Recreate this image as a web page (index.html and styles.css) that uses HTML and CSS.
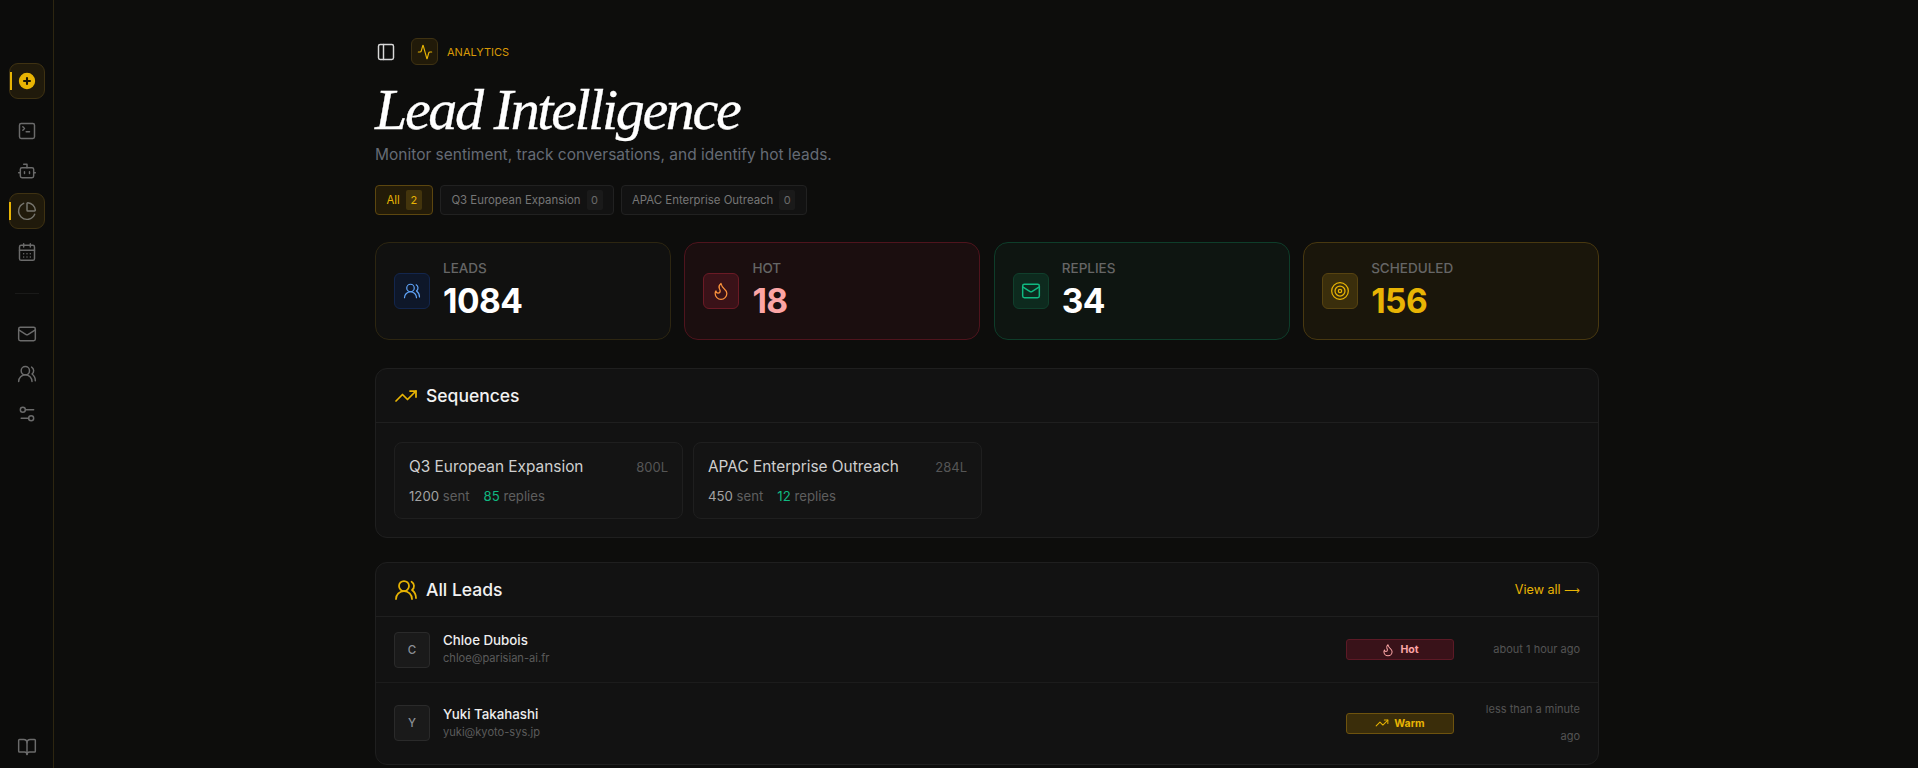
FILE: index.html
```html
<!DOCTYPE html>
<html lang="en">
<head>
<meta charset="utf-8">
<title>Lead Intelligence</title>
<link rel="stylesheet" href="styles.css">
</head>
<body>
<svg class="defs" width="0" height="0" aria-hidden="true">
  <symbol id="i-users" viewBox="0 0 24 24"><path d="M18 21a8 8 0 0 0-16 0"/><circle cx="10" cy="8" r="5"/><path d="M22 20c0-3.37-2-6.5-4-8a5 5 0 0 0-.45-8.3"/></symbol>
  <symbol id="i-flame" viewBox="0 0 24 24"><path d="M8.5 14.5A2.5 2.5 0 0 0 11 12c0-1.38-.5-2-1-3-1.072-2.143-.224-4.054 2-6 .5 2.5 2 4.9 4 6.5 2 1.6 3 3.5 3 5.5a7 7 0 1 1-14 0c0-1.153.433-2.294 1-3a2.5 2.5 0 0 0 2.5 2.5z"/></symbol>
  <symbol id="i-mail" viewBox="0 0 24 24"><path d="m22 7-8.97 5.7a1.94 1.94 0 0 1-2.06 0L2 7"/><rect x="2" y="4" width="20" height="16" rx="2"/></symbol>
  <symbol id="i-trend" viewBox="0 0 24 24"><path d="M22 7 13.5 15.5 8.5 10.5 2 17"/><path d="M16 7h6v6"/></symbol>
</svg>
<aside class="sidebar">
  <div class="side-group first">
    <a class="side-btn active inset"><svg class="ic plus" viewBox="0 0 24 24"><circle class="plus-disc" cx="12" cy="12" r="10"/><path class="plus-mark" d="M8 12h8M12 8v8"/></svg></a>
    <a class="side-btn"><svg class="ic" viewBox="0 0 24 24"><path d="m7 11 2-2-2-2"/><path d="M11 13h4"/><rect x="3" y="3" width="18" height="18" rx="2"/></svg></a>
    <a class="side-btn"><svg class="ic" viewBox="0 0 24 24"><path d="M12 8V4H8"/><rect x="4" y="8" width="16" height="12" rx="2"/><path d="M2 14h2M20 14h2M15 13v2M9 13v2"/></svg></a>
    <a class="side-btn active"><svg class="ic" viewBox="0 0 24 24"><path d="M21 12c.552 0 1.005-.449.95-.998a10 10 0 0 0-8.953-8.951c-.55-.055-.998.398-.998.95v8a1 1 0 0 0 1 1z"/><path d="M21.21 15.89A10 10 0 1 1 8 2.83"/></svg></a>
    <a class="side-btn"><svg class="ic" viewBox="0 0 24 24"><path d="M8 2v4M16 2v4"/><rect x="3" y="4" width="18" height="18" rx="2"/><path d="M3 10h18M8 14h.01M12 14h.01M16 14h.01M8 18h.01M12 18h.01M16 18h.01"/></svg></a>
  </div>
  <div class="side-divider"></div>
  <div class="side-group">
    <a class="side-btn"><svg class="ic"><use href="#i-mail"/></svg></a>
    <a class="side-btn"><svg class="ic"><use href="#i-users"/></svg></a>
    <a class="side-btn"><svg class="ic" viewBox="0 0 24 24"><path d="M20 7h-9M14 17H5"/><circle cx="17" cy="17" r="3"/><circle cx="7" cy="7" r="3"/></svg></a>
  </div>
  <div class="side-foot">
    <a class="side-btn"><svg class="ic" viewBox="0 0 24 24"><path d="M12 7v14"/><path d="M3 18a1 1 0 0 1-1-1V4a1 1 0 0 1 1-1h5a4 4 0 0 1 4 4 4 4 0 0 1 4-4h5a1 1 0 0 1 1 1v13a1 1 0 0 1-1 1h-6a3 3 0 0 0-3 3 3 3 0 0 0-3-3z"/></svg></a>
  </div>
</aside>
<main class="main">
  <div class="content">
    <div class="crumb">
      <svg class="ic toggle" viewBox="0 0 24 24"><rect x="3" y="3" width="18" height="18" rx="2"/><path d="M9 3v18"/></svg>
      <span class="crumb-icon"><svg class="ic" viewBox="0 0 24 24"><path d="M22 12h-2.48a2 2 0 0 0-1.93 1.46l-2.35 8.36a.25.25 0 0 1-.48 0L9.24 2.18a.25.25 0 0 0-.48 0l-2.35 8.36A2 2 0 0 1 4.49 12H2"/></svg></span>
      <span class="crumb-label">Analytics</span>
    </div>
    <h1 class="title">Lead Intelligence</h1>
    <p class="subtitle">Monitor sentiment, track conversations, and identify hot leads.</p>
    <div class="tabs">
      <a class="tab on">All <span class="count">2</span></a>
      <a class="tab">Q3 European Expansion <span class="count">0</span></a>
      <a class="tab">APAC Enterprise Outreach <span class="count">0</span></a>
    </div>
    <section class="stats">
      <div class="stat s-blue">
        <span class="stat-icon"><svg class="ic"><use href="#i-users"/></svg></span>
        <div class="stat-text"><div class="stat-label">Leads</div><div class="stat-num">1084</div></div>
      </div>
      <div class="stat s-red">
        <span class="stat-icon"><svg class="ic"><use href="#i-flame"/></svg></span>
        <div class="stat-text"><div class="stat-label">Hot</div><div class="stat-num">18</div></div>
      </div>
      <div class="stat s-green">
        <span class="stat-icon"><svg class="ic"><use href="#i-mail"/></svg></span>
        <div class="stat-text"><div class="stat-label">Replies</div><div class="stat-num">34</div></div>
      </div>
      <div class="stat s-gold">
        <span class="stat-icon"><svg class="ic" viewBox="0 0 24 24"><circle cx="12" cy="12" r="10"/><circle cx="12" cy="12" r="6"/><circle cx="12" cy="12" r="2"/></svg></span>
        <div class="stat-text"><div class="stat-label">Scheduled</div><div class="stat-num">156</div></div>
      </div>
    </section>
    <section class="panel seqs">
      <header class="panel-head">
        <h2><svg class="ic"><use href="#i-trend"/></svg>Sequences</h2>
      </header>
      <div class="seq-grid">
        <div class="seq">
          <div class="seq-top"><span class="seq-name">Q3 European Expansion</span><span class="seq-leads">800L</span></div>
          <div class="seq-meta"><span><b>1200</b> sent</span><span><b class="green">85</b> replies</span></div>
        </div>
        <div class="seq">
          <div class="seq-top"><span class="seq-name">APAC Enterprise Outreach</span><span class="seq-leads">284L</span></div>
          <div class="seq-meta"><span><b>450</b> sent</span><span><b class="green">12</b> replies</span></div>
        </div>
      </div>
    </section>
    <section class="panel leads">
      <header class="panel-head">
        <h2><svg class="ic"><use href="#i-users"/></svg>All Leads</h2>
        <a class="view-all">View all <span class="arrow">⟶</span></a>
      </header>
      <div class="lead">
        <span class="avatar">C</span>
        <div class="who"><div class="name">Chloe Dubois</div><div class="email">chloe@parisian-ai.fr</div></div>
        <span class="pill hot"><svg class="ic"><use href="#i-flame"/></svg>Hot</span>
        <span class="time">about 1 hour ago</span>
      </div>
      <div class="lead">
        <span class="avatar">Y</span>
        <div class="who"><div class="name">Yuki Takahashi</div><div class="email">yuki@kyoto-sys.jp</div></div>
        <span class="pill warm"><svg class="ic"><use href="#i-trend"/></svg>Warm</span>
        <span class="time">less than a minute ago</span>
      </div>
    </section>
  </div>
</main>
</body>
</html>
```

FILE: styles.css
```css
* { box-sizing: border-box; }
html, body { height: 100%; }
body {
  margin: 0;
  display: flex;
  height: 768px;
  overflow: hidden;
  background: #0d0d0c;
  color: #f2f2f2;
  font-family: Inter, "Noto Sans", sans-serif;
}
.defs { position: absolute; }
.ic {
  width: 20px;
  height: 20px;
  flex: none;
  fill: none;
  stroke: currentColor;
  stroke-width: 1.75;
  stroke-linecap: round;
  stroke-linejoin: round;
  display: block;
}

/* sidebar */
.sidebar {
  width: 54px;
  flex: none;
  border-right: 1px solid #2d2611;
  display: flex;
  flex-direction: column;
  align-items: center;
  padding: 63px 0 3px;
  background: #0c0c0b;
}
.side-group { display: flex; flex-direction: column; gap: 4.2px; }
.side-group.first .side-btn.inset { margin-bottom: 9.8px; }
.side-btn {
  position: relative;
  width: 36px;
  height: 36px;
  border: 1px solid transparent;
  border-radius: 9px;
  display: flex;
  align-items: center;
  justify-content: center;
  color: #6b6b6b;
}
.side-btn.active { background: #201a0b; border-color: #3f3212; color: #77766f; }
.side-btn.active::before {
  content: "";
  position: absolute;
  left: -1px;
  top: 8px;
  width: 2px;
  height: 18px;
  background: #e8b404;
}
.side-btn.inset::before { left: 0; }
.plus { width: 18px; height: 18px; }
.plus-disc { fill: #e8b404; stroke: #e8b404; }
.plus-mark { stroke: #1a1505; stroke-width: 2.8; }
.side-divider { width: 24px; height: 1px; background: #1a1a19; margin: 23px 0 22px; }
.side-foot { margin-top: auto; }

/* main */
.main {
  flex: 1;
  min-width: 0;
  display: flex;
  justify-content: center;
  padding: 38px 0 0 2px;
}
.content { width: 1224px; flex: none; }

.crumb { display: flex; align-items: center; height: 27px; }
.toggle { color: #d8d8d8; margin: 0 8px 0 1px; }
.crumb-icon {
  width: 27px;
  height: 27px;
  border-radius: 6px;
  border: 1px solid #3f3212;
  background: #211a09;
  color: #e8b404;
  display: flex;
  align-items: center;
  justify-content: center;
  margin-left: 7px;
}
.crumb-icon .ic { width: 16px; height: 16px; }
.crumb-label {
  margin-left: 9px;
  font-size: 11px;
  color: #d99a06;
  text-transform: uppercase;
}
.title {
  margin: 0;
  padding-top: 15px;
  font-family: "Liberation Serif", serif;
  font-style: italic;
  font-weight: 400;
  font-size: 58px;
  line-height: 60px;
  color: #fff;
  letter-spacing: -2.35px;
  -webkit-text-stroke: .35px #fff;
}
.subtitle {
  margin: 4px 0 0;
  font-size: 15.5px;
  line-height: 22px;
  color: #656b75;
}
.tabs { display: flex; gap: 6.5px; margin-top: 19px; }
.tab {
  height: 30px;
  display: flex;
  align-items: center;
  gap: 6px;
  padding: 0 10.5px;
  border: 1px solid #212121;
  border-radius: 4px;
  background: #121212;
  font-size: 11.4px;
  color: #767676;
}
.count {
  min-width: 16px;
  height: 20px;
  padding: 0 4px;
  display: flex;
  align-items: center;
  justify-content: center;
  border-radius: 2px;
  background: #1a1a1a;
  color: #6b6b6b;
  font-size: 11px;
}
.tab.on { background: #231b08; border-color: #5c460f; color: #e8b404; }
.tab.on .count { background: #43340c; color: #e8b404; }

/* stats */
.stats { display: grid; grid-template-columns: repeat(4, 1fr); gap: 13.5px; margin-top: 27px; }
.stat {
  height: 98px;
  display: flex;
  align-items: center;
  gap: 13px;
  padding: 0 18px;
  border: 1px solid;
  border-radius: 14px;
}
.stat-icon {
  width: 36px;
  height: 36px;
  border-radius: 6px;
  border: 1px solid;
  display: flex;
  align-items: center;
  justify-content: center;
  flex: none;
}
.stat-text { padding-bottom: 3px; }
.stat-label { font-size: 13.5px; line-height: 16px; color: #666; font-weight: 500; text-transform: uppercase; }
.stat-num { font-size: 33.5px; line-height: 36px; font-weight: 700; color: #fff; letter-spacing: -.5px; margin-top: 7.5px; }
.s-blue { background: #111110; border-color: #2d2611; }
.s-blue .stat-icon { background: #0e1729; border-color: #13264d; color: #60a5fa; }
.s-blue .ic { width: 18px; height: 18px; stroke-width: 1.6; }
.s-red .ic, .s-gold .ic { stroke-width: 1.5; }
.s-red { background: #1b0e0f; border-color: #4f141d; }
.s-red .stat-icon { background: #3a1218; border-color: #6b1a25; color: #fb923c; }
.s-red .stat-num { color: #fca5a5; }
.s-green { background: #0e1511; border-color: #0e3d2a; }
.s-green .stat-icon { background: #0d2a1e; border-color: #103f2c; color: #10b981; }
.s-gold { background: #1a160b; border-color: #483810; }
.s-gold .stat-icon { background: #3a2e0c; border-color: #574310; color: #e8b404; }
.s-gold .stat-num { color: #e8b404; }

/* panels */
.panel { background: #121212; border: 1px solid #1f1f1f; border-radius: 12px; }
.seqs { margin-top: 28px; height: 170px; }
.leads { margin-top: 24px; }
.panel-head {
  height: 54px;
  display: flex;
  align-items: center;
  justify-content: space-between;
  padding: 0 18px;
  border-bottom: 1px solid #1f1f1f;
}
.panel-head h2 {
  margin: 0;
  display: flex;
  align-items: center;
  gap: 8px;
  font-size: 17.5px;
  font-weight: 500;
  color: #f2f2f2;
}
.panel-head .ic { width: 24px; height: 24px; color: #e8b404; }
.view-all { font-size: 12.6px; color: #e8b404; }
.arrow { font-family: "DejaVu Sans", sans-serif; font-size: 11px; }
.seq-grid {
  display: grid;
  grid-template-columns: repeat(4, 1fr);
  gap: 10px;
  padding: 19px 18px 18px;
}
.seq {
  height: 77px;
  padding: 12.5px 14px 0;
  background: #141414;
  border: 1px solid #1f1f1f;
  border-radius: 8px;
}
.seq-top { display: flex; justify-content: space-between; align-items: center; height: 22px; }
.seq-name { font-size: 15.4px; font-weight: 400; color: #cfcfcf; white-space: nowrap; }
.seq-leads { font-size: 13px; color: #565656; }
.seq-meta { display: flex; gap: 14px; margin-top: 9.5px; font-size: 13.2px; line-height: 18px; color: #5f5f5f; }
.seq-meta b { font-weight: 400; color: #a3a3a3; }
.seq-meta b.green { color: #10b981; }

.lead {
  display: flex;
  align-items: center;
  padding: 14px 18px;
  gap: 13px;
}
.lead + .lead { border-top: 1px solid #1c1c1c; padding-top: 13px; }
.avatar {
  width: 36px;
  height: 36px;
  flex: none;
  display: flex;
  align-items: center;
  justify-content: center;
  background: #1a1a1a;
  border: 1px solid #2a2a2a;
  border-radius: 4px;
  font-size: 11.5px;
  font-weight: 500;
  color: #8a8f96;
}
.who { flex: 1; min-width: 0; padding-bottom: 2px; }
.name { font-size: 13.3px; line-height: 18px; font-weight: 500; color: #eee; }
.email { font-size: 11.1px; line-height: 16px; margin-top: 1px; color: #5b5b5b; }
.pill {
  width: 108px;
  height: 21px;
  flex: none;
  display: flex;
  align-items: center;
  justify-content: center;
  gap: 5px;
  border: 1px solid;
  border-radius: 3px;
  font-size: 10.5px;
  font-weight: 700;
}
.pill .ic { width: 14px; height: 14px; }
.hot { background: #391219; border-color: #5c1a26; color: #fca5a5; }
.warm { background: #3a2d0a; border-color: #6e530e; color: #e8b404; }
.time {
  width: 104px;
  margin-left: 9px;
  flex: none;
  text-align: right;
  font-size: 11px;
  line-height: 27px;
  color: #545454;
}
```
